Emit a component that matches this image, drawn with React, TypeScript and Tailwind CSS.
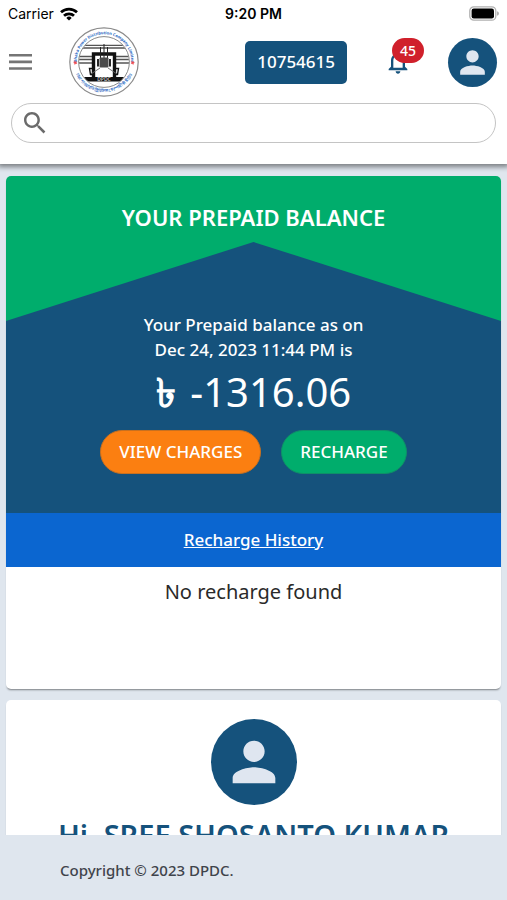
import type { ReactNode } from "react";

function PersonIcon({ className }: { className: string }) {
  return (
    <svg viewBox="0 0 24 24" fill="currentColor" className={className} aria-hidden="true">
      <path d="M12 12c2.21 0 4-1.79 4-4s-1.79-4-4-4-4 1.79-4 4 1.79 4 4 4zm0 2c-2.67 0-8 1.34-8 4v2h16v-2c0-2.66-5.33-4-8-4z" />
    </svg>
  );
}

function WifiIcon() {
  return (
    <svg viewBox="0 0 18 14" className="h-[14px] w-[18px]" fill="none" stroke="#000" strokeWidth="2.7" aria-hidden="true">
      <path d="M1 5.3a11.6 11.6 0 0 1 16 0" />
      <path d="M4 8.8a7.2 7.2 0 0 1 10 0" />
      <path d="M9 13.6L6.3 10.9a3.9 3.9 0 0 1 5.4 0z" fill="#000" stroke="none" />
    </svg>
  );
}

function BatteryIcon() {
  return (
    <svg viewBox="0 0 30 15" className="h-[15px] w-[30px]" aria-hidden="true">
      <rect x="0.8" y="0.8" width="26" height="13.4" rx="4" fill="#fff" stroke="#b0b0b0" strokeWidth="1.3" />
      <rect x="2.6" y="2.6" width="22.4" height="9.8" rx="2.2" fill="#000" />
      <path d="M28 5.2q2 .6 2 2.3t-2 2.3z" fill="#b0b0b0" />
    </svg>
  );
}

function StatusBar() {
  return (
    <div className="relative z-20 grid h-[27px] grid-cols-3 items-center bg-white px-[8px] font-['Inter','Liberation_Sans',sans-serif] text-black">
      <div className="flex items-center gap-[6px] text-[14px]">
        Carrier
        <WifiIcon />
      </div>
      <div className="text-center text-[14px] font-semibold">9:20 PM</div>
      <div className="flex justify-end">
        <BatteryIcon />
      </div>
    </div>
  );
}

function Logo() {
  return (
    <svg viewBox="0 0 70 70" className="size-[70px]" role="img" aria-label="DPDC">
      <defs>
        <path id="ring-top" d="M8.2 39A27.2 27.2 0 1 1 61.8 39" />
        <path id="ring-bottom" d="M4.3 38.5A31 31 0 0 0 65.7 38.5" />
        <clipPath id="disc">
          <circle cx="35" cy="35" r="25" />
        </clipPath>
      </defs>
      <circle cx="35" cy="35" r="34.2" fill="#fff" stroke="#8a8a8a" strokeWidth="1.2" />
      <circle cx="35" cy="35" r="25.4" fill="#fff" stroke="#8a8a8a" strokeWidth="1" />
      <g clipPath="url(#disc)">
        <path d="M10 18.3h50M10 21h50M10 29.5h50M10 32.5h50M10 36h50" stroke="#555" strokeWidth="1.3" />
        <path d="M24.5 28h21v24h-21z" fill="#fff" />
        <path d="M24.5 51V27h21v24" fill="none" stroke="#111" strokeWidth="3.4" />
        <path d="M31.5 32V20M35 31V17M38.5 32V20" stroke="#222" strokeWidth="1" />
        <rect x="30.5" y="30.5" width="9" height="10" rx="1" fill="#4a4a4a" />
        <path d="M29 32v7.5M41 32v7.5" stroke="#111" strokeWidth="1.8" />
        <path d="M31 41l-9 6M39 41l9 6" stroke="#666" strokeWidth="0.9" />
        <path d="M23 41.500h-2.500l1 6H23M47 41.500h2.500l-1 6H47" fill="none" stroke="#111" strokeWidth="1.4" />
        <path d="M8 50h54v4.500H8z" fill="#111" />
        <text x="35" y="54.200" textAnchor="middle" fill="#ccc" fontFamily="'Noto Sans', sans-serif" fontWeight="600" fontSize="5">
          DPDC
        </text>
      </g>
      <g fill="#2464c0" fontFamily="'Noto Sans', sans-serif" fontWeight="700">
        <text fontSize="4">
          <textPath href="#ring-top" startOffset="50%" textAnchor="middle">
            Dhaka Power Distribution Company Limited
          </textPath>
        </text>
        <text fontSize="4">
          <textPath href="#ring-bottom" startOffset="50%" textAnchor="middle">
            ঢাকা পাওয়ার ডিস্ট্রিবিউশন কোম্পানী লিমিটেড
          </textPath>
        </text>
      </g>
      <path d="M5.800 33.600l.8 1.200 1.600-.2-.8 1.200.8 1.200-1.600-.2-.8 1.400-.4-1.600-1.200-.8 1.200-.8z" fill="#ee4a50" />
      <path d="M64.200 33.600l-.8 1.200-1.600-.2.8 1.200-.8 1.200 1.600-.2.8 1.400.4-1.600 1.200-.8-1.200-.8z" fill="#ee4a50" />
    </svg>
  );
}

function Header() {
  return (
    <header className="relative z-10 bg-white pb-[21px] shadow-[0_1px_5px_2px_rgba(0,0,0,0.45)]">
      <div className="flex h-[70px] items-center pr-[10px] pl-[9px]">
        <button type="button" aria-label="Menu" className="text-[#757575]">
          <svg viewBox="0 0 23 16" className="h-4 w-[23px]" fill="currentColor" aria-hidden="true">
            <path d="M0 0h23v2.600H0zM0 6.600h23v2.600H0zM0 13.200h23v2.600H0z" />
          </svg>
        </button>
        <a href="#home" className="ml-[37px]">
          <Logo />
        </a>
        <button type="button" className="ml-auto h-[43px] rounded-[5px] bg-[#15527c] px-3 text-[17px] font-medium text-white">
          10754615
        </button>
        <button type="button" aria-label="45 notifications" className="relative ml-[37px] text-[#15527c]">
          <svg viewBox="0 0 24 24" className="size-7" fill="currentColor" aria-hidden="true">
            <path d="M12 22c1.100 0 2-.9 2-2h-4c0 1.100.89 2 2 2zm6-6v-5c0-3.070-1.640-5.640-4.500-6.320V4c0-.83-.67-1.500-1.500-1.500s-1.500.67-1.500 1.500v.68C7.630 5.360 6 7.920 6 11v5l-2 2v1h16v-1l-2-2zm-2 1H8v-6c0-2.480 1.510-4.500 4-4.500s4 2.020 4 4.500v6z" />
          </svg>
          <span className="absolute -top-[10px] left-2 flex h-[25px] w-8 items-center justify-center rounded-full bg-[#d0202b] text-[14px] font-medium text-white">
            45
          </span>
        </button>
        <button type="button" aria-label="Account" className="ml-9 flex size-[49px] items-center justify-center rounded-full bg-[#15527c] text-[#dfe6f0]">
          <PersonIcon className="size-[37px]" />
        </button>
      </div>
      <div className="px-[11px] pt-[6px]">
        <label className="flex h-10 items-center rounded-full border border-[#c4c4c4] pl-3">
          <svg viewBox="3 3 18 18" className="size-[22px] text-[#6b6b6b]" fill="currentColor" aria-hidden="true">
            <path d="M15.500 14h-.79l-.28-.27C15.410 12.590 16 11.110 16 9.500 16 5.910 13.090 3 9.500 3S3 5.910 3 9.500 5.910 16 9.500 16c1.610 0 3.090-.59 4.230-1.570l.27.28v.79l5 4.990L20.490 19l-4.990-5zm-6 0C7.010 14 5 11.990 5 9.500S7.010 5 9.500 5 14 7.010 14 9.500 11.990 14 9.500 14z" />
          </svg>
          <input type="search" aria-label="Search" className="min-w-0 flex-1 bg-transparent px-3 outline-none" />
        </label>
      </div>
    </header>
  );
}

function Card({ children }: { children: ReactNode }) {
  return <section className="overflow-hidden rounded-[5px] bg-white shadow-[0_2px_2px_-1px_rgba(0,0,0,0.45)]">{children}</section>;
}

function BalanceCard() {
  return (
    <Card>
      <div className="bg-[#00ad6c] text-center font-medium text-white">
        <h2 className="pt-[25px] pb-[9px] text-[22px] leading-8 font-semibold">YOUR PREPAID BALANCE</h2>
        <div className="bg-[#15527c] px-4 pt-[70px] pb-[39px] [clip-path:polygon(0_79px,50%_0,100%_79px,100%_100%,0_100%)]">
          <p className="text-[17px] leading-[25px]">
            Your Prepaid balance as on
            <br />
            Dec 24, 2023 11:44 PM is
          </p>
          <p className="pt-[2px] text-[40px] leading-[56px] font-normal">
            <span className="mr-1 font-bold">৳</span> -1316.06
          </p>
          <div className="flex justify-center gap-5 pt-[10px]">
            <button type="button" className="h-11 rounded-full border border-[#c8701f] bg-[#fb7f11] px-[18px] text-[17px]">
              VIEW CHARGES
            </button>
            <button type="button" className="h-11 rounded-full border border-[#0f8f68] bg-[#00ad6c] px-[18px] text-[17px]">
              RECHARGE
            </button>
          </div>
        </div>
      </div>
      <div className="flex h-[54px] items-center justify-center bg-[#0b66d0]">
        <a href="#history" className="text-[17px] font-medium text-white underline">
          Recharge History
        </a>
      </div>
      <p className="pt-[10px] pb-[82px] text-center text-[20px] leading-[30px] text-[#2a2a2a]">No recharge found</p>
    </Card>
  );
}

function ProfileCard() {
  return (
    <Card>
      <div className="flex flex-col items-center pt-[19px] pb-6 text-[#15527c]">
        <div className="flex size-[86px] items-center justify-center rounded-full bg-[#15527c] text-[#dfe6f0]">
          <PersonIcon className="size-16" />
        </div>
        <h2 className="pt-2 text-center text-[29px] leading-[44px] font-semibold whitespace-nowrap">Hi, SREE SHOSANTO KUMAR</h2>
      </div>
    </Card>
  );
}

export default function App() {
  return (
    <div className="flex h-screen flex-col overflow-hidden bg-[#dfe6ee] font-['Noto_Sans',sans-serif]">
      <StatusBar />
      <Header />
      <main className="flex min-h-0 flex-1 flex-col gap-[11px] overflow-hidden px-[6px] pt-3 *:shrink-0">
        <BalanceCard />
        <ProfileCard />
      </main>
      <footer className="px-[60px] pt-6 pb-[19px] text-[15px] leading-[22px] font-medium text-[#3f444b]">Copyright © 2023 DPDC.</footer>
    </div>
  );
}
